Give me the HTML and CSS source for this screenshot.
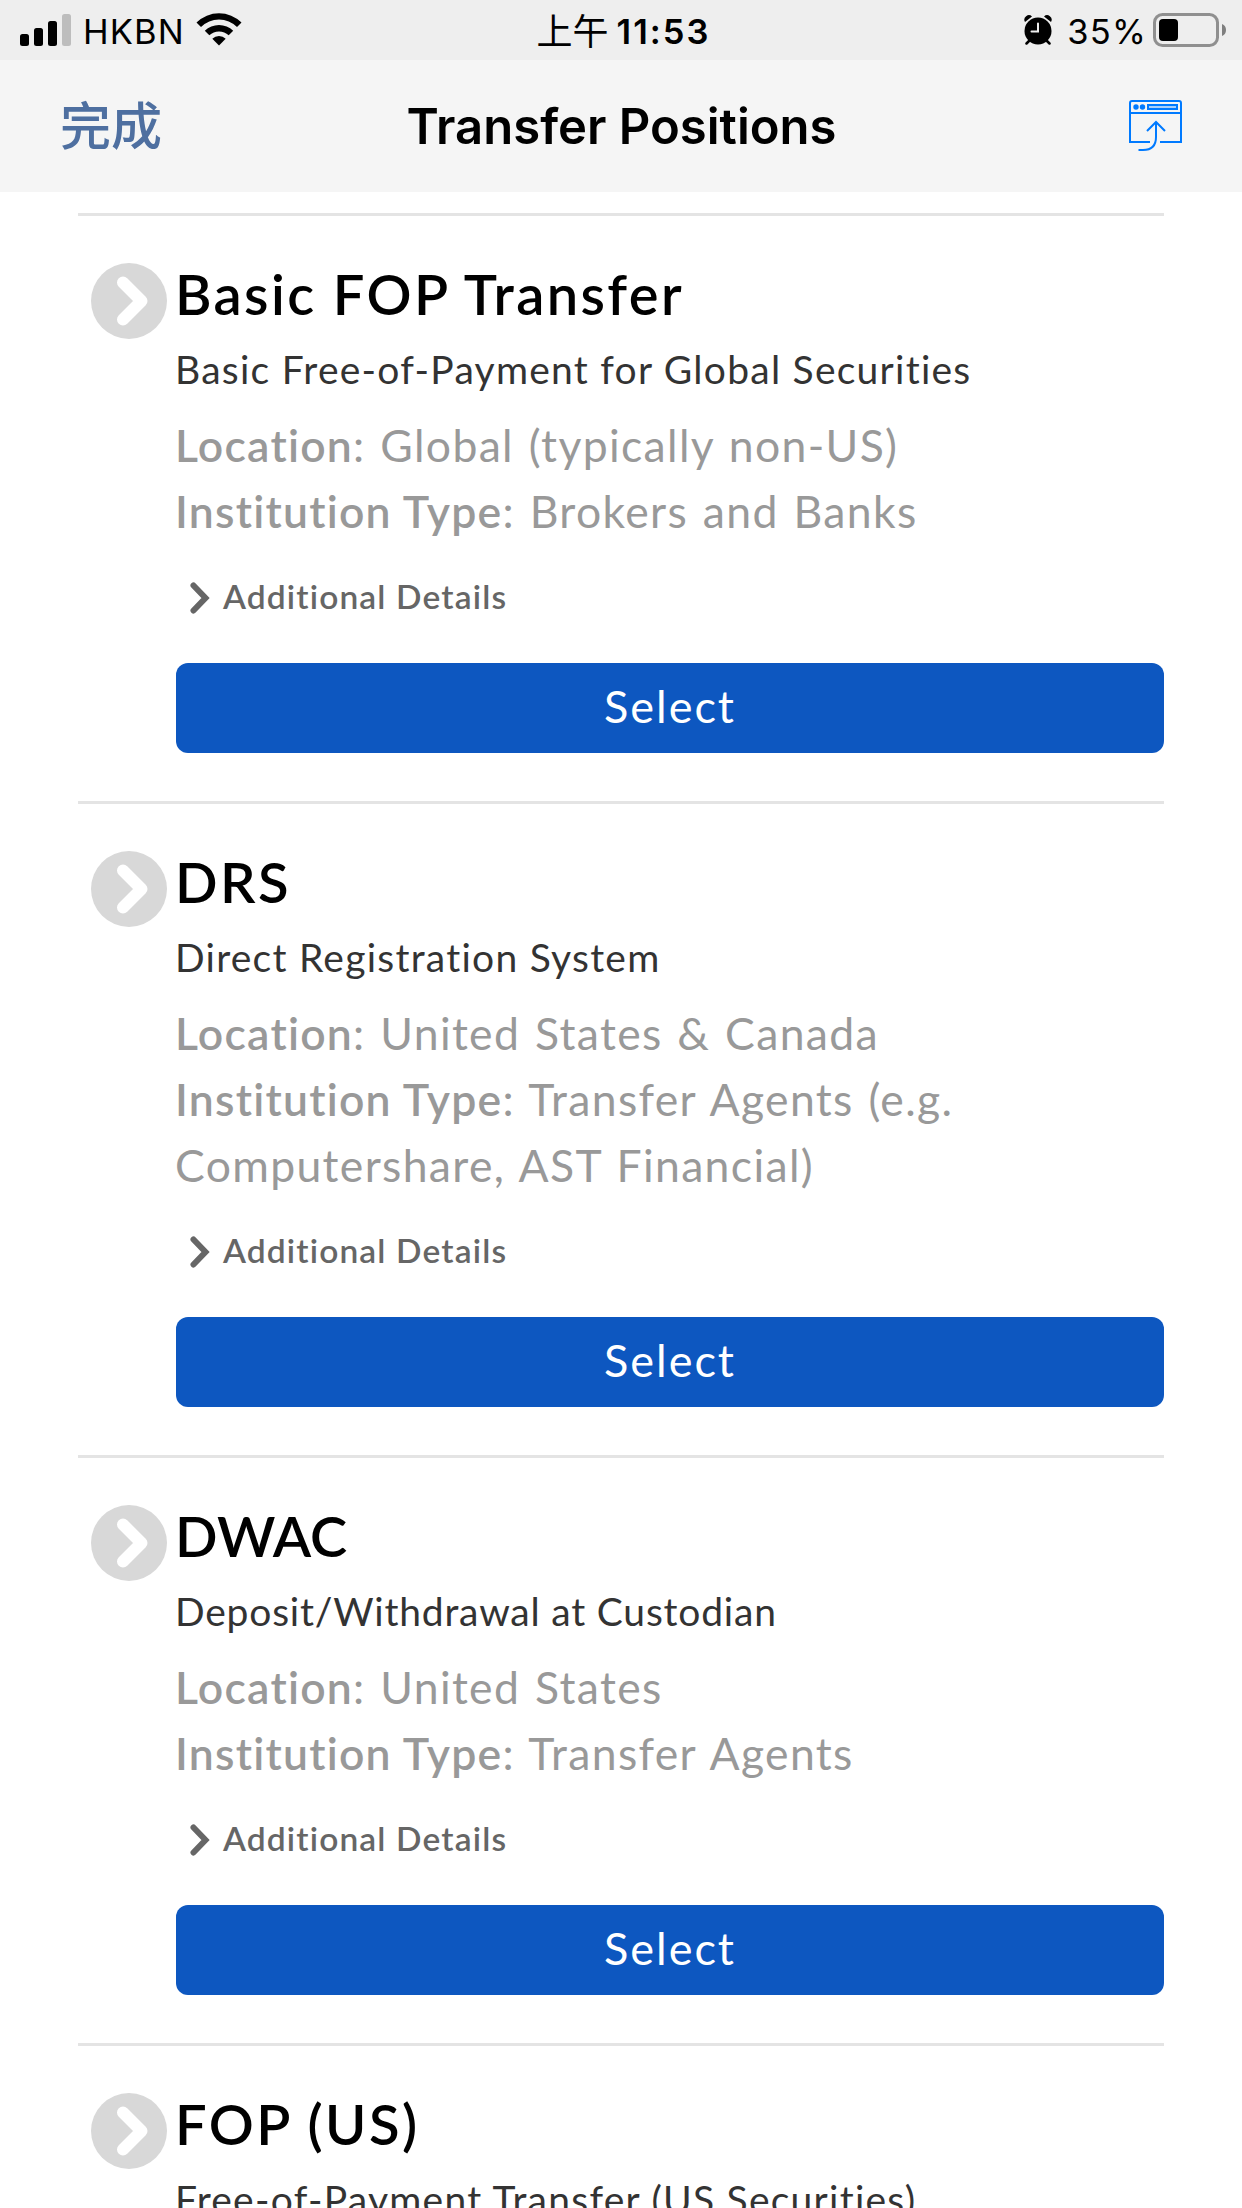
FILE: index.html
```html
<!DOCTYPE html>
<html lang="en">
<head>
  <meta charset="UTF-8" />
  <meta name="viewport" content="width=device-width, initial-scale=1.0" />
  <title>Transfer Positions</title>
  <link rel="stylesheet" href="styles.css">
</head>
<body>

  <!-- Status bar -->
  <div class="status-bar">
    <div class="status-left">
      <svg class="signal" width="51" height="32" viewBox="0 0 51 32">
        <rect x="0" y="20" width="9" height="12" rx="2.5" />
        <rect x="14" y="14" width="9" height="18" rx="2.5" />
        <rect x="28" y="7" width="9" height="25" rx="2.5" />
        <rect x="42" y="0" width="9" height="32" rx="2.5" fill="#bdbdbd" />
      </svg>
      <span class="carrier">HKBN</span>
      <svg class="wifi" width="46" height="34" viewBox="0 0 46 34">
        <path d="M0.5 10.5 A32 32 0 0 1 45.5 10.5 L41 15 A25.5 25.5 0 0 0 5 15 Z" />
        <path d="M8.8 18.8 A20.3 20.3 0 0 1 37.2 18.8 L32.7 23.3 A14 14 0 0 0 13.3 23.3 Z" />
        <path d="M16.3 26.8 A9.6 9.6 0 0 1 29.7 26.8 L23 33.5 Z" />
      </svg>
    </div>
    <div class="status-time"><span class="ampm">上午</span><span class="clock">11:53</span></div>
    <div class="status-right">
      <svg class="alarm" width="28" height="30" viewBox="0 0 28 30">
        <circle cx="14" cy="16" r="13.5" />
        <path d="M1 7 A4.5 4.5 0 0 1 8 1.5 Z M27 7 A4.5 4.5 0 0 0 20 1.5 Z" />
        <path d="M5 26 L2.5 28.5 M23 26 L25.5 28.5" stroke="#000" stroke-width="2.5" stroke-linecap="round" />
        <path d="M14 8.5 V16.5 H7.5" fill="none" stroke="#eee" stroke-width="2" stroke-linecap="round" />
      </svg>
      <span class="percent">35%</span>
      <svg class="battery" width="74" height="34" viewBox="0 0 74 34">
        <rect x="1.5" y="1.5" width="63" height="31" rx="8" fill="none" stroke="#8f8f8f" stroke-width="3" />
        <rect x="6" y="6" width="19" height="22" rx="4" />
        <path d="M69 11 Q73 12.5 73 17 Q73 21.5 69 23 Z" fill="#7f7f7f" />
      </svg>
    </div>
  </div>

  <!-- Navigation bar -->
  <div class="nav-bar">
    <a class="done" href="#">完成</a>
    <h1>Transfer Positions</h1>
    <svg class="open-window" width="54" height="52" viewBox="0 0 54 52">
      <path d="M21 43 H1 V4 Q1 2 3 2 H50 Q52 2 52 4 V43 H31 M1 14 H52" />
      <path d="M9.500 51 H14 Q27 51 27 38 V23.500 M18 32 L27 23 L36 32" />
      <rect x="19" y="6" width="29" height="4" />
      <circle cx="7" cy="8" r="1.700" />
      <circle cx="13.500" cy="8" r="1.700" />
    </svg>
  </div>

  <!-- Transfer methods -->
  <div class="container">
    <div class="method">
      <svg class="arrow" width="76" height="76" viewBox="0 0 76 76">
        <circle cx="38" cy="38" r="38" />
        <path d="M32 19.500 L50.500 38 L32 56.500" />
      </svg>
      <div class="method-body">
        <h2>Basic FOP Transfer</h2>
        <p class="subtitle">Basic Free-of-Payment for Global Securities</p>
        <p class="info"><strong>Location</strong>: Global (typically non-US)</p>
        <p class="info"><strong>Institution Type</strong>: Brokers and Banks</p>
        <div class="details">
          <svg width="20" height="32" viewBox="0 0 20 32"><path d="M3.500 3.500 L15.500 16 L3.500 28.500" /></svg>
          <span>Additional Details</span>
        </div>
        <button>Select</button>
      </div>
    </div>

    <div class="method">
      <svg class="arrow" width="76" height="76" viewBox="0 0 76 76">
        <circle cx="38" cy="38" r="38" />
        <path d="M32 19.500 L50.500 38 L32 56.500" />
      </svg>
      <div class="method-body">
        <h2>DRS</h2>
        <p class="subtitle">Direct Registration System</p>
        <p class="info"><strong>Location</strong>: United States &amp; Canada</p>
        <p class="info"><strong>Institution Type</strong>: Transfer Agents (e.g. Computershare, AST Financial)</p>
        <div class="details">
          <svg width="20" height="32" viewBox="0 0 20 32"><path d="M3.500 3.500 L15.500 16 L3.500 28.500" /></svg>
          <span>Additional Details</span>
        </div>
        <button>Select</button>
      </div>
    </div>

    <div class="method tight">
      <svg class="arrow" width="76" height="76" viewBox="0 0 76 76">
        <circle cx="38" cy="38" r="38" />
        <path d="M32 19.500 L50.500 38 L32 56.500" />
      </svg>
      <div class="method-body">
        <h2>DWAC</h2>
        <p class="subtitle">Deposit/Withdrawal at Custodian</p>
        <p class="info"><strong>Location</strong>: United States</p>
        <p class="info"><strong>Institution Type</strong>: Transfer Agents</p>
        <div class="details">
          <svg width="20" height="32" viewBox="0 0 20 32"><path d="M3.500 3.500 L15.500 16 L3.500 28.500" /></svg>
          <span>Additional Details</span>
        </div>
        <button>Select</button>
      </div>
    </div>

    <div class="method">
      <svg class="arrow" width="76" height="76" viewBox="0 0 76 76">
        <circle cx="38" cy="38" r="38" />
        <path d="M32 19.500 L50.500 38 L32 56.500" />
      </svg>
      <div class="method-body">
        <h2>FOP (US)</h2>
        <p class="subtitle">Free-of-Payment Transfer (US Securities)</p>
      </div>
    </div>
  </div>

</body>
</html>
```
FILE: styles.css
```css
* {
  box-sizing: border-box;
}

html {
  overflow: hidden;
}

body {
  margin: 0;
  height: 2208px;
  overflow: hidden;
  background-color: #fff;
  font-family: Lato, "Liberation Sans", sans-serif;
  color: #000;
}

h1, h2, p {
  margin: 0;
}

svg {
  display: block;
  flex-shrink: 0;
}

/* Status bar */
.status-bar {
  display: grid;
  grid-template-columns: 1fr auto 1fr;
  height: 60px;
  padding: 0 15px 0 20px;
  background-color: #eee;
  font-family: Inter, "Noto Sans CJK TC", sans-serif;
  font-size: 34.5px;
  line-height: 63px;
}

.status-left, .status-time, .status-right {
  display: flex;
}

.status-right {
  justify-content: flex-end;
}

.signal {
  margin-top: 14px;
}

.carrier {
  margin-left: 12px;
  letter-spacing: 1.1px;
}

.wifi {
  margin: 12px 0 0 11px;
}

.ampm {
  font-family: "Noto Sans CJK TC", sans-serif;
  font-size: 36px;
  line-height: 58px;
}

.clock {
  margin-left: 8px;
  font-weight: 600;
  letter-spacing: 2px;
}

.alarm {
  margin-top: 15px;
}

.percent {
  margin-left: 15px;
  letter-spacing: 1.2px;
}

.battery {
  margin: 13px 0 0 6px;
}

/* Navigation bar */
.nav-bar {
  display: grid;
  grid-template-columns: 1fr auto 1fr;
  height: 132px;
  padding: 0 59px 0 60px;
  background-color: #f5f5f5;
}

.done {
  color: #4e6fa0;
  font-family: "Noto Sans CJK TC", sans-serif;
  font-size: 51px;
  font-weight: 500;
  line-height: 127px;
  text-decoration: none;
}

h1 {
  font-family: Inter, sans-serif;
  font-size: 49px;
  font-weight: 600;
  line-height: 133px;
}

.open-window {
  justify-self: end;
  margin-top: 39px;
  fill: none;
  stroke: #007aff;
  stroke-width: 2;
}

.open-window circle {
  fill: #007aff;
}

.open-window rect {
  fill: #a9d0fb;
}

/* Transfer methods */
.container {
  margin: 21px 78px 0;
}

.method {
  display: flex;
  padding: 45px 0 48px 13px;
  border-top: 3px solid #e4e4e4;
}

.arrow {
  margin: 2px 9px 0 0;
  fill: #d8d8d8;
}

.arrow path {
  fill: none;
  stroke: #fff;
  stroke-width: 12;
  stroke-linecap: round;
  stroke-linejoin: round;
}

.method-body {
  flex: 1;
}

h2, .subtitle, .info {
  margin-left: -1px;
}

h2 {
  font-size: 56px;
  font-weight: 600;
  line-height: 66px;
  letter-spacing: 2.4px;
}

.subtitle {
  margin-top: 14px;
  margin-bottom: 15px;
  color: #333;
  font-size: 39px;
  line-height: 56px;
  letter-spacing: 1.25px;
}

.tight h2 {
  letter-spacing: 0;
}

.tight .subtitle {
  letter-spacing: 0.8px;
}

.info {
  color: #999;
  font-size: 44.5px;
  line-height: 66px;
  letter-spacing: 1.35px;
  word-spacing: 2px;
}

.info strong {
  font-weight: 600;
  letter-spacing: 1.25px;
  word-spacing: 0;
}

.details {
  display: flex;
  align-items: center;
  margin: 27px 0 42px 14px;
  color: #666;
  font-size: 33.5px;
  font-weight: 600;
  line-height: 50px;
  letter-spacing: 1.15px;
}

.details svg {
  margin: 4px 13px 0 0;
  fill: none;
  stroke: #666;
  stroke-width: 6;
  stroke-linecap: round;
}

button {
  display: block;
  width: 100%;
  height: 90px;
  padding: 0 0 5px;
  border: none;
  border-radius: 12px;
  background-color: #0d57c0;
  color: #fff;
  font-family: inherit;
  font-size: 45px;
  letter-spacing: 2px;
}
```
